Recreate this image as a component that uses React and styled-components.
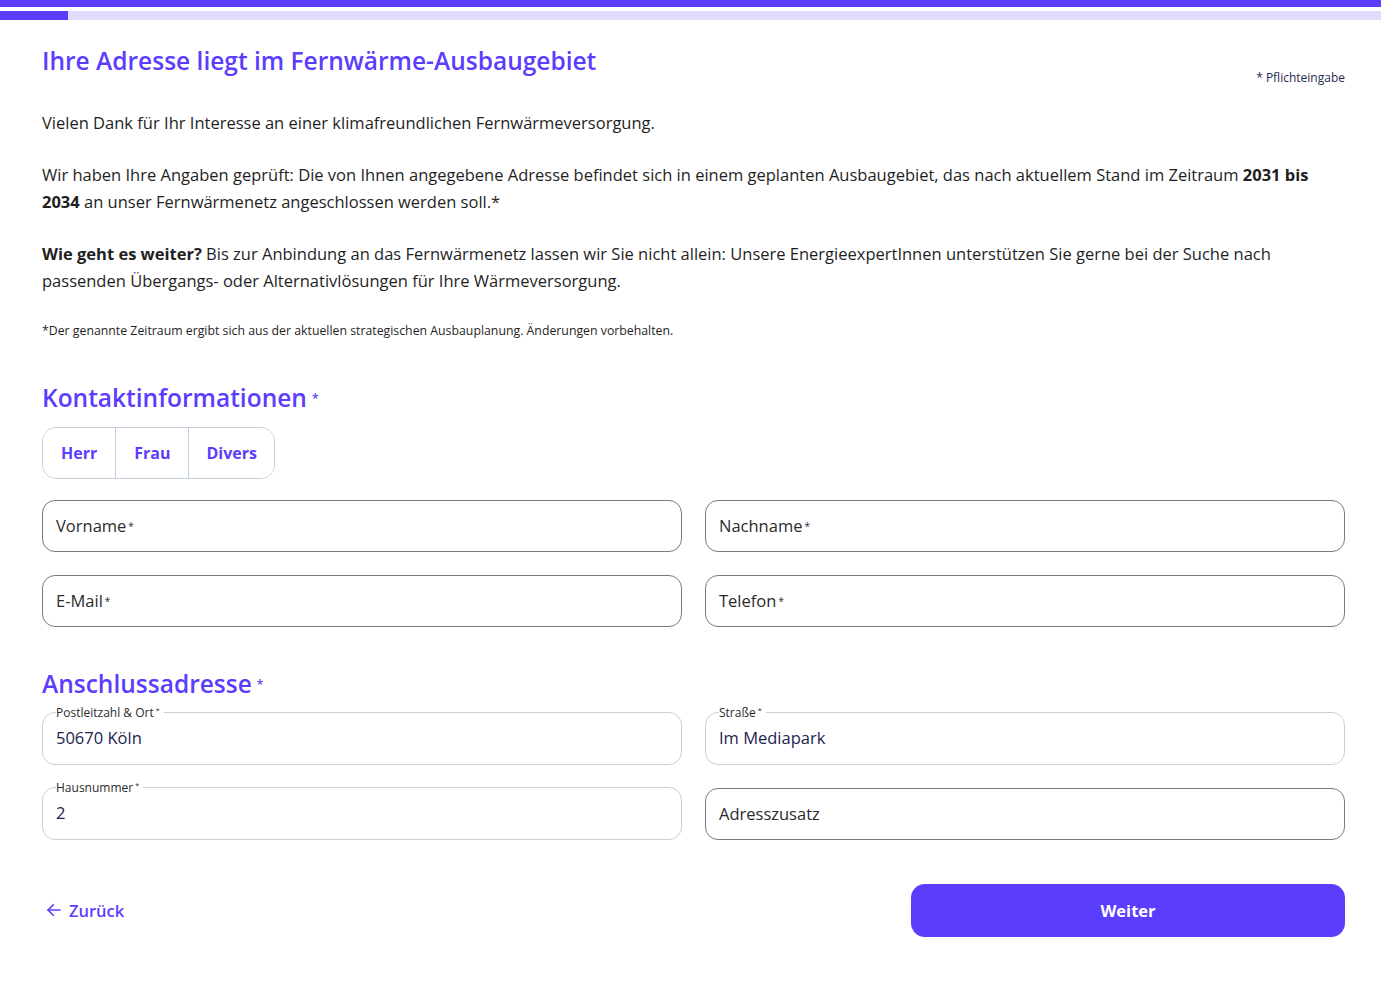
import React from 'react'
import styled, { createGlobalStyle } from 'styled-components'

const GlobalStyle = createGlobalStyle`
    * { box-sizing: border-box; }
    body {
        margin: 0;
        background: #fff;
        font-family: "Open Sans", "Liberation Sans", sans-serif;
        color: #1f1f1f;
    }
`;

const purple = '#5b3dfd';

const Arrow = () => (
    <svg width="18" height="18" viewBox="0 0 24 24" fill="none" stroke={purple} strokeWidth="2.2" strokeLinecap="round" strokeLinejoin="round">
        <path d="M20 12H4" />
        <path d="M11 5l-7 7 7 7" />
    </svg>
);

const Field = ({ label, value, required }) => {
    if (value) {
        return (
            <FilledBox>
                <Legend>{label}{required && <Star>*</Star>}</Legend>
                <Value>{value}</Value>
            </FilledBox>
        )
    }
    return (
        <EmptyBox>
            {label}{required && <Star>*</Star>}
        </EmptyBox>
    )
}

const App = () => {
    return (
        <>
            <GlobalStyle />
            <TopBar />
            <Progress>
                <ProgressFill />
            </Progress>
            <Page>
                <Header>
                    <Title>Ihre Adresse liegt im Fernwärme-Ausbaugebiet</Title>
                    <Required>* Pflichteingabe</Required>
                </Header>
                <Text>Vielen Dank für Ihr Interesse an einer klimafreundlichen Fernwärmeversorgung.</Text>
                <Text>
                    Wir haben Ihre Angaben geprüft: Die von Ihnen angegebene Adresse befindet sich in einem geplanten Ausbaugebiet, das nach aktuellem Stand im Zeitraum <b>2031 bis 2034</b> an unser Fernwärmenetz angeschlossen werden soll.*
                </Text>
                <Text>
                    <b>Wie geht es weiter?</b> Bis zur Anbindung an das Fernwärmenetz lassen wir Sie nicht allein: Unsere EnergieexpertInnen unterstützen Sie gerne bei der Suche nach passenden Übergangs- oder Alternativlösungen für Ihre Wärmeversorgung.
                </Text>
                <Note>*Der genannte Zeitraum ergibt sich aus der aktuellen strategischen Ausbauplanung. Änderungen vorbehalten.</Note>

                <Section>
                    <SectionTitle>Kontaktinformationen<TitleStar>*</TitleStar></SectionTitle>
                    <Segmented>
                        <Segment>Herr</Segment>
                        <Segment>Frau</Segment>
                        <Segment>Divers</Segment>
                    </Segmented>
                    <Grid>
                        <Field label="Vorname" required />
                        <Field label="Nachname" required />
                        <Field label="E-Mail" required />
                        <Field label="Telefon" required />
                    </Grid>
                </Section>

                <Section>
                    <SectionTitle>Anschlussadresse<TitleStar>*</TitleStar></SectionTitle>
                    <Grid>
                        <Field label="Postleitzahl & Ort" value="50670 Köln" required />
                        <Field label="Straße" value="Im Mediapark" required />
                        <Field label="Hausnummer" value="2" required />
                        <Field label="Adresszusatz" />
                    </Grid>
                </Section>

                <Actions>
                    <BackLink href="#"><Arrow /> Zurück</BackLink>
                    <NextButton>Weiter</NextButton>
                </Actions>
            </Page>
        </>
    )
}

const TopBar = styled.div`
    height: 7px;
    background: ${purple};
`;

const Progress = styled.div`
    margin-top: 4px;
    height: 9px;
    background: #e1dcfe;
`;

const ProgressFill = styled.div`
    width: 68px;
    height: 100%;
    background: ${purple};
`;

const Page = styled.div`
    padding: 25px 36px 40px 42px;
`;

const Header = styled.div`
    display: flex;
    justify-content: space-between;
    align-items: flex-start;
    margin-bottom: 23px;
`;

const Title = styled.h1`
    margin: 0;
    font-size: 24.5px;
    font-weight: 600;
    line-height: 32px;
    color: ${purple};
`;

const Required = styled.div`
    margin-top: 24px;
    font-size: 12px;
    color: #262b52;
`;

const Text = styled.p`
    margin: 0 0 25px;
    font-size: 16.5px;
    line-height: 27px;
    color: #1f1f1f;
    b { font-weight: 700; }
`;

const Note = styled.p`
    margin: 28px 0 0;
    font-size: 12.3px;
    color: #1f1f1f;
`;

const Section = styled.section`
    margin-top: 43px;
    & + & { margin-top: 41px; }
`;

const SectionTitle = styled.h2`
    margin: 0 0 12px;
    font-size: 24.5px;
    font-weight: 600;
    line-height: 32px;
    color: ${purple};
`;

const Star = styled.sup`
    font-size: 0.6em;
    margin-left: 2px;
    vertical-align: 0.55em;
    line-height: 0;
`;

const TitleStar = styled.span`
    font-size: 12px;
    margin-left: 5px;
    vertical-align: 0.35em;
`;

const Segmented = styled.div`
    display: inline-flex;
    border: 1px solid #c3cedb;
    border-radius: 14px;
    overflow: hidden;
    margin-bottom: 21px;
`;

const Segment = styled.button`
    height: 50px;
    padding: 0 18px;
    border: none;
    border-left: 1px solid #c3cedb;
    background: #fff;
    font-family: inherit;
    font-size: 16px;
    font-weight: 700;
    color: ${purple};
    &:first-child { border-left: none; }
    &:last-child { padding: 0 17px; }
`;

const Grid = styled.div`
    display: grid;
    grid-template-columns: 1fr 1fr;
    column-gap: 23px;
    row-gap: 23px;
`;

const EmptyBox = styled.div`
    height: 52px;
    display: flex;
    align-items: center;
    padding: 0 13px;
    border: 1px solid #7b7b7b;
    border-radius: 13px;
    font-size: 16.5px;
    color: #2b2b2b;
`;

const FilledBox = styled.fieldset`
    margin: -7px 0 0;
    height: 59px;
    padding: 0 13px;
    border: 1px solid #cfcfcf;
    border-radius: 13px;
    min-width: 0;
`;

const Legend = styled.legend`
    padding: 0 4px 0 0;
    font-size: 12px;
    line-height: 14px;
    color: #2b2b2b;
`;

const Value = styled.div`
    margin-top: 6px;
    font-size: 16.5px;
    line-height: 24px;
    color: #1c2352;
`;

const Actions = styled.div`
    margin-top: 44px;
    display: flex;
    justify-content: space-between;
    align-items: center;
`;

const BackLink = styled.a`
    display: inline-flex;
    align-items: center;
    gap: 6px;
    padding-left: 3px;
    font-size: 16.5px;
    font-weight: 600;
    color: ${purple};
    text-decoration: none;
`;

const NextButton = styled.button`
    width: 434px;
    height: 53px;
    border: none;
    border-radius: 14px;
    background: ${purple};
    color: #fff;
    font-family: inherit;
    font-size: 16.5px;
    font-weight: 700;
`;

export default App
